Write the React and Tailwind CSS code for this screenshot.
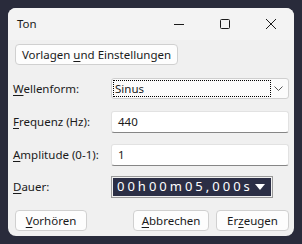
import React from "react";

const U = ({ children }) => <span className="underline underline-offset-2">{children}</span>;

function Btn({ children, className = "" }) {
  return (
    <div
      className={
        "flex items-center justify-center h-[21px] rounded-[4px] border border-[#d0d0d0] bg-[#fdfdfd] text-[11.5px] text-[#1a1a1a] " +
        className
      }
    >
      {children}
    </div>
  );
}

function TextBox({ value }) {
  return (
    <div className="w-[178px] h-[22px] rounded-[3px] border border-[#e2e2e2] border-b-[#868686] bg-white flex items-center pl-[6px] text-[11.5px] text-[#1a1a1a]">
      {value}
    </div>
  );
}

export default function App() {
  return (
    <div
      className="w-[302px] h-[244px] bg-[#292b3b] p-[8px]"
      style={{ fontFamily: '"Noto Sans", "Open Sans", sans-serif' }}
    >
      <div className="w-[286px] h-[228px] rounded-[8px] bg-[#f0f0f0] flex flex-col overflow-hidden">
        {/* Title bar */}
        <div className="h-[32px] bg-[#f3f3f3] flex items-center">
          <span className="ml-[9px] text-[11.5px] text-[#1a1a1a]">Ton</span>
          <div className="ml-auto flex items-center h-full">
            <div className="w-[46px] h-full flex items-center justify-center">
              <svg width="10" height="10" viewBox="0 0 10 10">
                <line x1="0" y1="5.5" x2="10" y2="5.5" stroke="#1a1a1a" strokeWidth="1" />
              </svg>
            </div>
            <div className="w-[46px] h-full flex items-center justify-center">
              <svg width="10" height="10" viewBox="0 0 10 10">
                <rect x="0.5" y="0.5" width="9" height="9" rx="1" fill="none" stroke="#1a1a1a" strokeWidth="1" />
              </svg>
            </div>
            <div className="w-[46px] h-full flex items-center justify-center">
              <svg width="10" height="10" viewBox="0 0 10 10">
                <path d="M0 0 L10 10 M10 0 L0 10" stroke="#1a1a1a" strokeWidth="1" />
              </svg>
            </div>
          </div>
        </div>

        {/* Body */}
        <div className="flex flex-col pl-[5px] pr-[5px]">
          <Btn className="mt-[4px] ml-[2px] w-[163px] h-[20px]">
            <span>
              Vorlagen <U>u</U>nd Einstellungen
            </span>
          </Btn>

          {/* Wellenform */}
          <div className="mt-[13px] flex items-center h-[21px]">
            <span className="w-[98px] text-[11.5px] text-[#1a1a1a]">
              <U>W</U>ellenform:
            </span>
            <div className="w-[178px] h-[21px] rounded-[3px] border border-[#cfcfcf] bg-[#fbfbfb] flex items-center relative">
              <div className="ml-[1px] w-[158px] h-[17px] border border-dotted border-black flex items-center pl-[1px] text-[11.5px] text-[#1a1a1a]">
                Sinus
              </div>
              <svg className="ml-auto mr-[5px]" width="9" height="6" viewBox="0 0 9 6">
                <path d="M0.5 0.5 L4.5 4.5 L8.5 0.5" fill="none" stroke="#555" strokeWidth="1" />
              </svg>
            </div>
          </div>

          {/* Frequenz */}
          <div className="mt-[12px] flex items-center">
            <span className="w-[98px] text-[11.5px] text-[#1a1a1a]">
              <U>F</U>requenz (Hz):
            </span>
            <TextBox value="440" />
          </div>

          {/* Amplitude */}
          <div className="mt-[11px] flex items-center">
            <span className="w-[98px] text-[11.5px] text-[#1a1a1a]">
              <U>A</U>mplitude (0-1):
            </span>
            <TextBox value="1" />
          </div>

          {/* Dauer */}
          <div className="mt-[10px] flex items-center">
            <span className="w-[98px] text-[11.5px] text-[#1a1a1a]">
              <U>D</U>auer:
            </span>
            <div className="w-[162px] h-[22px] border border-[#9a9a9a] p-[1px] bg-[#f0f0f0]">
              <div className="w-full h-full bg-[#2b2e45] flex items-center pl-[4px] text-[13px] text-white">
                <span className="tracking-[3px]">00h00m05,000s</span>
                <svg className="ml-[2px]" width="10" height="6" viewBox="0 0 10 6">
                  <path d="M0 0 L10 0 L5 6 Z" fill="#ffffff" />
                </svg>
              </div>
            </div>
          </div>

          {/* Bottom buttons */}
          <div className="mt-[12px] flex items-center">
            <Btn className="ml-[2px] w-[72px] h-[21px]">
              <span>
                <U>V</U>orhören
              </span>
            </Btn>
            <Btn className="ml-[46px] w-[76px] h-[21px]">
              <span>
                <U>A</U>bbrechen
              </span>
            </Btn>
            <Btn className="ml-[7px] w-[73px] h-[21px]">
              <span>
                Er<U>z</U>eugen
              </span>
            </Btn>
          </div>
        </div>
      </div>
    </div>
  );
}
